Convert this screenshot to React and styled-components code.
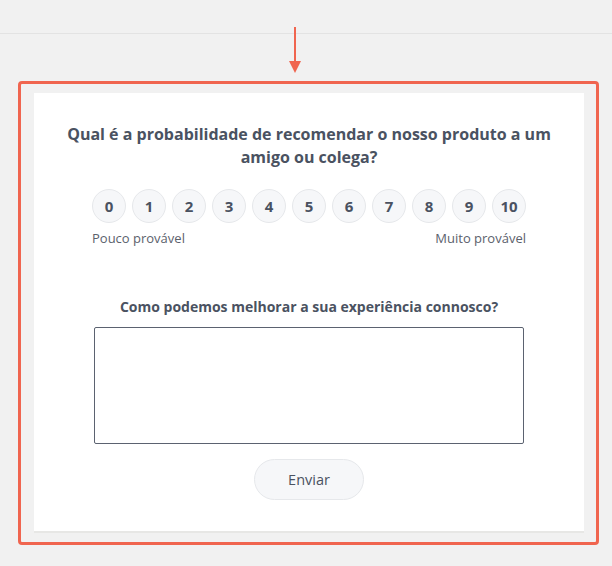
import React, { useState } from "react";
import styled, { createGlobalStyle } from "styled-components";

const GlobalStyle = createGlobalStyle`
  html, body {
    margin: 0;
    padding: 0;
    background: #f1f1f1;
  }
  body {
    font-family: "Open Sans", "Noto Sans", sans-serif;
  }
`;

const Page = styled.div`
  position: relative;
  width: 612px;
  min-height: 566px;
  background: #f1f1f1;
  overflow: hidden;
`;

const TopBar = styled.div`
  height: 33px;
  border-bottom: 1px solid #e3e3e3;
`;

const Arrow = styled.svg`
  position: absolute;
  left: 288px;
  top: 26px;
`;

const Frame = styled.div`
  margin: 47px 13px 0 18px;
  border: 3px solid #f0654f;
  border-radius: 4px;
  padding: 9px 12px 11px 13px;
`;

const Card = styled.div`
  background: #fff;
  box-shadow: 0 2px 0 #e7e7e5;
  height: 438px;
  box-sizing: border-box;
  padding-top: 30px;
  display: flex;
  flex-direction: column;
  align-items: center;
`;

const Title = styled.h2`
  margin: 0;
  width: 500px;
  font-size: 16px;
  line-height: 23px;
  font-weight: 700;
  color: #4a5261;
  text-align: center;
`;

const Scale = styled.div`
  margin-top: 20px;
  width: 434px;
`;

const Options = styled.div`
  display: flex;
  gap: 6px;
`;

const Option = styled.button`
  width: 34px;
  height: 34px;
  padding: 0;
  border-radius: 50%;
  border: 1px solid ${(p) => (p.$active ? "#f0654f" : "#e6e8eb")};
  background: ${(p) => (p.$active ? "#fdeeea" : "#f6f7f9")};
  color: #4a5261;
  font-family: inherit;
  font-size: 15px;
  font-weight: 700;
  cursor: pointer;
  display: flex;
  align-items: center;
  justify-content: center;
`;

const Labels = styled.div`
  margin-top: 6px;
  display: flex;
  justify-content: space-between;
  font-size: 13px;
  line-height: 18px;
  color: #5b616c;
`;

const Question = styled.h3`
  margin: 50px 0 0;
  font-size: 14px;
  line-height: 20px;
  font-weight: 700;
  color: #4a5261;
  text-align: center;
`;

const Answer = styled.textarea`
  margin-top: 10px;
  width: 430px;
  height: 117px;
  box-sizing: border-box;
  border: 1px solid #5b6270;
  border-radius: 2px;
  resize: none;
  font-family: inherit;
  font-size: 14px;
  padding: 8px;
  outline: none;
`;

const Submit = styled.button`
  margin-top: 15px;
  width: 110px;
  height: 41px;
  border-radius: 21px;
  border: 1px solid #e6e8eb;
  background: #f6f7f9;
  color: #4a5261;
  font-family: inherit;
  font-size: 14.5px;
  font-weight: 500;
  cursor: pointer;
`;

export default function App() {
  const [score, setScore] = useState(null);
  const [text, setText] = useState("");

  return (
    <Page>
      <GlobalStyle />
      <TopBar />
      <Arrow width="14" height="48" viewBox="0 0 14 48">
        <line x1="7" y1="1" x2="7" y2="38" stroke="#f0654f" strokeWidth="2" />
        <polygon points="1,35 13,35 7,47" fill="#f0654f" />
      </Arrow>
      <Frame>
        <Card>
          <Title>Qual é a probabilidade de recomendar o nosso produto a um amigo ou colega?</Title>
          <Scale>
            <Options>
              {Array.from({ length: 11 }, (_, i) => (
                <Option key={i} $active={score === i} onClick={() => setScore(i)}>
                  {i}
                </Option>
              ))}
            </Options>
            <Labels>
              <span>Pouco provável</span>
              <span>Muito provável</span>
            </Labels>
          </Scale>
          <Question>Como podemos melhorar a sua experiência connosco?</Question>
          <Answer value={text} onChange={(e) => setText(e.target.value)} />
          <Submit>Enviar</Submit>
        </Card>
      </Frame>
    </Page>
  );
}
